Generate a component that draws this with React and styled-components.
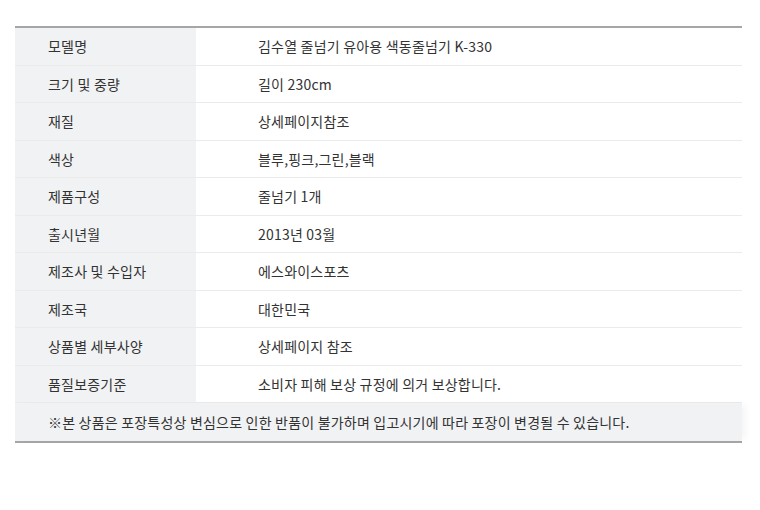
import React from 'react';
import styled, { createGlobalStyle } from 'styled-components';

const GlobalStyle = createGlobalStyle`
    body {
        margin: 0;
        background: #fff;
        font-family: 'Noto Sans CJK KR', 'Noto Sans', sans-serif;
        color: #333;
    }
`;

const Page = styled.div`
    padding: 26px 18px 0 15px;
    width: 760px;
    box-sizing: border-box;
`;

const Table = styled.div`
    border-top: 2px solid #a6a6a6;
    border-bottom: 2px solid #a6a6a6;
    width: 727px;
`;

const Row = styled.div`
    display: grid;
    grid-template-columns: 181px 1fr;
    height: 37.5px;
    box-sizing: border-box;
    border-bottom: 1px solid #ebebeb;
`;

const Head = styled.div`
    background-color: #f1f2f4;
    display: flex;
    align-items: center;
    padding-left: 33px;
    font-size: 14px;
    letter-spacing: 0.2px;
`;

const Value = styled.div`
    display: flex;
    align-items: center;
    padding-left: 62px;
    font-size: 14px;
    letter-spacing: 0.2px;
`;

const Note = styled.div`
    height: 37.5px;
    display: flex;
    align-items: center;
    padding-left: 33px;
    background-color: #f1f2f4;
    box-shadow: 6px 0 6px -2px rgba(0, 0, 0, 0.04);
    font-size: 14px;
    letter-spacing: 0.2px;
`;

const rows = [
    ['모델명', '김수열 줄넘기 유아용 색동줄넘기 K-330'],
    ['크기 및 중량', '길이 230cm'],
    ['재질', '상세페이지참조'],
    ['색상', '블루,핑크,그린,블랙'],
    ['제품구성', '줄넘기 1개'],
    ['출시년월', '2013년 03월'],
    ['제조사 및 수입자', '에스와이스포츠'],
    ['제조국', '대한민국'],
    ['상품별 세부사양', '상세페이지 참조'],
    ['품질보증기준', '소비자 피해 보상 규정에 의거 보상합니다.'],
];

const App = () => {
    return (
        <Page>
            <GlobalStyle />
            <Table>
                {rows.map(([label, value]) => (
                    <Row key={label}>
                        <Head>{label}</Head>
                        <Value>{value}</Value>
                    </Row>
                ))}
                <Note>
                    ※본 상품은 포장특성상 변심으로 인한 반품이 불가하며 입고시기에 따라 포장이 변경될 수 있습니다.
                </Note>
            </Table>
        </Page>
    );
};

export default App;
